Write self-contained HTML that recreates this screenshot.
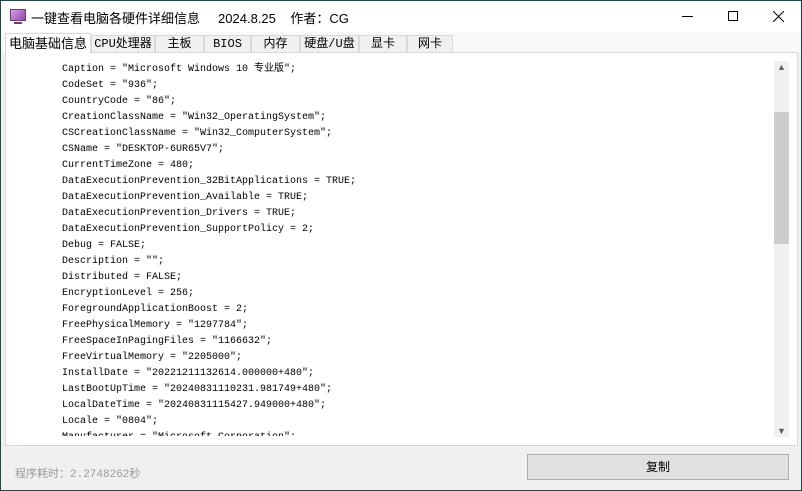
<!DOCTYPE html>
<html><head><meta charset="utf-8"><style>
*{margin:0;padding:0;box-sizing:border-box}
body{width:802px;height:491px;background:#f0f0f0;position:relative;overflow:hidden;font-family:"Liberation Sans","Noto Sans CJK SC",sans-serif;border:1px solid #1e4a4a}
.title{position:absolute;left:0;top:0;width:800px;height:31px;background:#fff}
.title .t{position:absolute;left:30px;top:7px;font-size:13px;color:#000;white-space:pre}
.ic{position:absolute;left:9px;top:8px;width:16px;height:12px;border:1px solid #6a3a7a;background:linear-gradient(135deg,#d9a0e8,#8d4aa8)}
.ic:after{content:"";position:absolute;left:3px;top:12px;width:8px;height:2px;background:#6a3a7a}
.wb{position:absolute;top:0;height:31px;width:46px}
.tabs{position:absolute;top:31px;left:0;width:800px;height:21px;background:#f9f9f9}
.tab{position:absolute;top:3px;height:18px;border:1px solid #d9d9d9;border-bottom:none;background:#f0f0f0;font-size:12px;line-height:17px;text-align:center;white-space:nowrap;overflow:hidden;font-family:"Liberation Mono","Noto Sans CJK SC",monospace}
.tab.sel{top:1px;height:21px;background:#fff;font-size:13px;line-height:19px;font-family:"Liberation Sans","Noto Sans CJK SC",sans-serif;z-index:2}
.panel{position:absolute;left:4px;top:51px;width:793px;height:394px;background:#fff;border:1px solid #d9d9d9}
.txt{position:absolute;left:56px;top:9px;font-family:"Liberation Mono","Noto Sans CJK SC",monospace;font-size:10px;line-height:16px;color:#000;white-space:pre;height:374px;overflow:hidden}
.sb{position:absolute;left:768px;top:8px;width:15px;height:376px;background:#f0f0f0}
.thumb{position:absolute;left:0;top:51px;width:15px;height:132px;background:#cdcdcd}
.ar{position:absolute;left:0;width:15px;text-align:center;font-size:9px;color:#606060}
.status{position:absolute;left:14px;top:464px;font-size:11px;color:#9a9a9a;font-family:"Liberation Mono","Noto Sans CJK SC",monospace}
.btn{position:absolute;left:526px;top:453px;width:262px;height:26px;background:#e1e1e1;border:1px solid #adadad;text-align:center;font-size:12px;line-height:24px}
</style></head><body>
<div class="title"><div class="ic"></div><div class="t">一键查看电脑各硬件详细信息     2024.8.25    作者：CG</div>
<div class="wb" style="left:664px"><div style="position:absolute;left:17px;top:15px;width:11px;height:1px;background:#000"></div></div>
<div class="wb" style="left:709px"><div style="position:absolute;left:18px;top:10px;width:10px;height:10px;border:1px solid #000"></div></div>
<div class="wb" style="left:755px"><svg style="position:absolute;left:17px;top:10px" width="11" height="11"><path d="M0 0L11 11M11 0L0 11" stroke="#000" stroke-width="1"/></svg></div></div>
<div class="tabs">
<div class="tab sel" style="left:4px;width:86px">电脑基础信息</div>
<div class="tab" style="left:90px;width:64px">CPU处理器</div>
<div class="tab" style="left:154px;width:49px">主板</div>
<div class="tab" style="left:203px;width:47px">BIOS</div>
<div class="tab" style="left:250px;width:49px">内存</div>
<div class="tab" style="left:299px;width:59px">硬盘/U盘</div>
<div class="tab" style="left:358px;width:48px">显卡</div>
<div class="tab" style="left:406px;width:46px">网卡</div>
</div>
<div class="panel"><div class="txt">Caption = "Microsoft Windows 10 专业版";
CodeSet = "936";
CountryCode = "86";
CreationClassName = "Win32_OperatingSystem";
CSCreationClassName = "Win32_ComputerSystem";
CSName = "DESKTOP-6UR65V7";
CurrentTimeZone = 480;
DataExecutionPrevention_32BitApplications = TRUE;
DataExecutionPrevention_Available = TRUE;
DataExecutionPrevention_Drivers = TRUE;
DataExecutionPrevention_SupportPolicy = 2;
Debug = FALSE;
Description = "";
Distributed = FALSE;
EncryptionLevel = 256;
ForegroundApplicationBoost = 2;
FreePhysicalMemory = "1297784";
FreeSpaceInPagingFiles = "1166632";
FreeVirtualMemory = "2205000";
InstallDate = "20221211132614.000000+480";
LastBootUpTime = "20240831110231.981749+480";
LocalDateTime = "20240831115427.949000+480";
Locale = "0804";
Manufacturer = "Microsoft Corporation";</div>
<div class="sb"><div class="ar" style="top:1px">&#9650;</div><div class="thumb"></div><div class="ar" style="bottom:1px">&#9660;</div></div></div>
<div class="status">程序耗时：2.2748262秒</div>
<div class="btn">复制</div>
</body></html>
